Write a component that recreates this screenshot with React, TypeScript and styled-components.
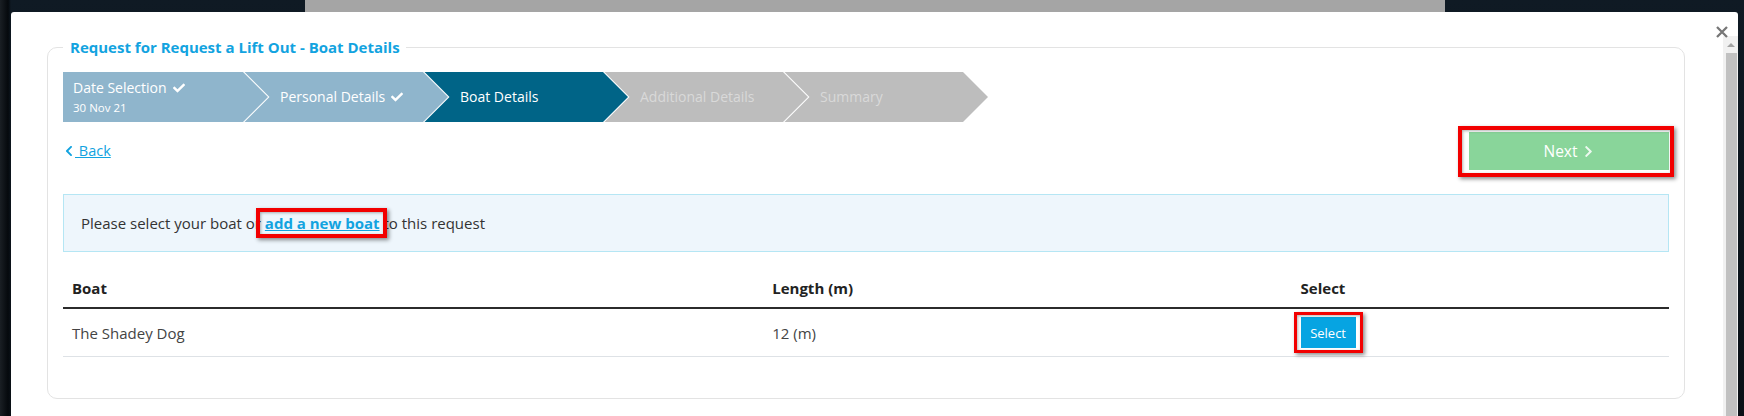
import React from "react"
import styled, { createGlobalStyle } from "styled-components"
import { FaCheck, FaChevronLeft, FaChevronRight } from "react-icons/fa"

type StepState = "done" | "active" | "todo"

type StepData = {
  title: string
  sub?: string
  state: StepState
}

const steps: StepData[] = [
  { title: "Date Selection", sub: "30 Nov 21", state: "done" },
  { title: "Personal Details", state: "done" },
  { title: "Boat Details", state: "active" },
  { title: "Additional Details", state: "todo" },
  { title: "Summary", state: "todo" }
]

const stepBg: Record<StepState, string> = {
  done: "#8fb5cc",
  active: "#006487",
  todo: "#bdbdbd"
}

const stepFg: Record<StepState, string> = {
  done: "#ffffff",
  active: "#ffffff",
  todo: "#d9d9d9"
}

const GlobalStyle = createGlobalStyle`
  html, body {
    margin: 0;
    padding: 0;
  }
  body {
    font-family: "Open Sans", "Noto Sans", sans-serif;
    background: #0b1219;
  }
`

const Backdrop = styled.div`
  width: 1744px;
  height: 416px;
  overflow: hidden;
  display: flex;
  flex-direction: column;
  background:
    linear-gradient(90deg, #1a1f24 0px, #05090d 8px, transparent 11px),
    linear-gradient(180deg, #0f1a24, #0a1016);
`

const PageStrip = styled.div`
  flex: none;
  margin-left: 305px;
  width: 1140px;
  height: 12px;
  background: #a5a5a5;
`

const Modal = styled.div`
  position: relative;
  flex: 1;
  display: flex;
  margin-left: 11px;
  width: 1727px;
  background: #fff;
  border-radius: 3px 3px 0 0;
`

const CloseButton = styled.button`
  position: absolute;
  top: 14px;
  right: 10px;
  width: 12px;
  height: 12px;
  padding: 0;
  border: 0;
  background: none;
  z-index: 2;
  svg {
    display: block;
  }
`

const Content = styled.div`
  flex: 1;
  min-width: 0;
`

const Scrollbar = styled.div`
  flex: none;
  width: 15px;
  margin-top: 24px;
  display: flex;
  flex-direction: column;
  background: #f1f1f1;
`

const ScrollArrow = styled.div`
  flex: none;
  height: 17px;
  display: flex;
  align-items: center;
  justify-content: center;
  &::before {
    content: "";
    border-left: 4px solid transparent;
    border-right: 4px solid transparent;
    border-bottom: 4px solid #a3a3a3;
  }
`

const ScrollThumb = styled.div`
  flex: 1;
  margin: 0 1px 0 3px;
  background: #c1c1c1;
`

const Fieldset = styled.fieldset`
  margin: 24px 38px 0 36px;
  padding: 0 15px 41px;
  border: 1px solid #e3e3e3;
  border-radius: 10px;
  min-width: 0;
`

const Legend = styled.legend`
  padding: 0 6px 0 7px;
  font-size: 15px;
  line-height: 22px;
  font-weight: 700;
  color: #12a3e0;
`

const Wizard = styled.div`
  display: flex;
  height: 50px;
  margin-top: 14px;
`

const Step = styled.div<{ $state: StepState; $first: boolean; $z: number }>`
  position: relative;
  z-index: ${p => p.$z};
  flex: none;
  box-sizing: border-box;
  width: 180px;
  height: 50px;
  padding-left: ${p => (p.$first ? 10 : 37)}px;
  display: flex;
  flex-direction: column;
  justify-content: center;
  background: ${p => stepBg[p.$state]};
  color: ${p => stepFg[p.$state]};
  font-size: 14px;

  &::before {
    content: "";
    position: absolute;
    top: 0;
    left: 100%;
    width: 27px;
    height: 50px;
    background: #fff;
    clip-path: polygon(0 0, 1.5px 0, 26.5px 50%, 1.5px 100%, 0 100%);
  }

  &::after {
    content: "";
    position: absolute;
    top: 0;
    left: 100%;
    width: 25px;
    height: 50px;
    background: ${p => stepBg[p.$state]};
    clip-path: polygon(0 0, 100% 50%, 0 100%);
  }
`

const StepTitle = styled.div`
  display: flex;
  align-items: center;
  gap: 6px;
  line-height: 20px;
  white-space: nowrap;
`

const StepSub = styled.div`
  margin-top: 2px;
  font-size: 11.5px;
  line-height: 16px;
`

const Toolbar = styled.div`
  display: flex;
  align-items: center;
  justify-content: space-between;
  margin-top: 10px;
  height: 38px;
`

const BackLink = styled.a`
  display: inline-flex;
  align-items: center;
  color: #12a3e0;
  font-size: 14.5px;
  line-height: 20px;
  cursor: pointer;

  span {
    text-decoration: underline;
  }
`

const Highlight = styled.span<{ $inset: string; $width: number }>`
  position: relative;
  &::after {
    content: "";
    position: absolute;
    inset: ${p => p.$inset};
    border: ${p => p.$width}px solid #f20000;
    box-shadow: 2px 2px 4px rgba(0, 0, 0, 0.45), inset 1px 1px 3px rgba(0, 0, 0, 0.3);
    pointer-events: none;
  }
`

const NextButton = styled.button`
  display: flex;
  align-items: center;
  justify-content: center;
  gap: 4px;
  width: 200px;
  height: 38px;
  border: 0;
  background: #89d59a;
  color: #fff;
  font-family: inherit;
  font-size: 15.5px;
`

const Alert = styled.div`
  margin-top: 24px;
  padding: 18px 17px;
  border: 1px solid #b5e6f4;
  background: #eef6fc;
  color: #333;
  font-size: 15px;
  line-height: 20px;
`

const AlertLink = styled.a`
  color: #12a3e0;
  font-weight: 700;
  text-decoration: underline;
`

const Table = styled.table`
  width: 100%;
  margin-top: 17px;
  border-collapse: collapse;
  table-layout: fixed;
  font-size: 15px;
  line-height: 20px;
`

const Th = styled.th<{ $w: string }>`
  box-sizing: border-box;
  width: ${p => p.$w};
  padding: 9px 9px;
  text-align: left;
  font-weight: 700;
  color: #222;
  border-bottom: 2px solid #2b2b2b;
`

const Td = styled.td`
  padding: 8px 9px;
  color: #444;
  border-bottom: 1px solid #dee2e6;
  vertical-align: middle;
`

const SelectButton = styled.button`
  display: block;
  width: 55px;
  height: 31px;
  border: 0;
  background: #06a4e2;
  color: #fff;
  font-family: inherit;
  font-size: 13px;
`

export default function App() {
  return (
    <>
      <GlobalStyle />
      <Backdrop>
        <PageStrip />
        <Modal>
          <CloseButton aria-label="Close">
            <svg width="12" height="12" viewBox="0 0 12 12">
              <path d="M1 1L11 11M11 1L1 11" stroke="#777" strokeWidth="2.3" />
            </svg>
          </CloseButton>
          <Content>
            <Fieldset>
              <Legend>Request for Request a Lift Out - Boat Details</Legend>
              <Wizard>
                {steps.map((s, i) => (
                  <Step key={s.title} $state={s.state} $first={i === 0} $z={steps.length - i}>
                    <StepTitle>
                      {s.title}
                      {s.state === "done" && <FaCheck size={12} />}
                    </StepTitle>
                    {s.sub && <StepSub>{s.sub}</StepSub>}
                  </Step>
                ))}
              </Wizard>
              <Toolbar>
                <BackLink>
                  <FaChevronLeft size={12} />
                  <span>&nbsp;Back</span>
                </BackLink>
                <Highlight $inset="-6px -5px -7px -11px" $width={4}>
                  <NextButton>
                    Next <FaChevronRight size={13} style={{ opacity: 0.85 }} />
                  </NextButton>
                </Highlight>
              </Toolbar>
              <Alert>
                Please select your boat or{" "}
                <Highlight $inset="-5px -7px -5px -9px" $width={4}>
                  <AlertLink>add a new boat</AlertLink>
                </Highlight>{" "}
                to this request
              </Alert>
              <Table>
                <thead>
                  <tr>
                    <Th $w="43.6%">Boat</Th>
                    <Th $w="32.9%">Length (m)</Th>
                    <Th $w="23.5%">Select</Th>
                  </tr>
                </thead>
                <tbody>
                  <tr>
                    <Td>The Shadey Dog</Td>
                    <Td>12 (m)</Td>
                    <Td>
                      <Highlight $inset="-5px -7px" $width={3} style={{ display: "inline-block" }}>
                        <SelectButton>Select</SelectButton>
                      </Highlight>
                    </Td>
                  </tr>
                </tbody>
              </Table>
            </Fieldset>
          </Content>
          <Scrollbar>
            <ScrollArrow />
            <ScrollThumb />
          </Scrollbar>
        </Modal>
      </Backdrop>
    </>
  )
}
